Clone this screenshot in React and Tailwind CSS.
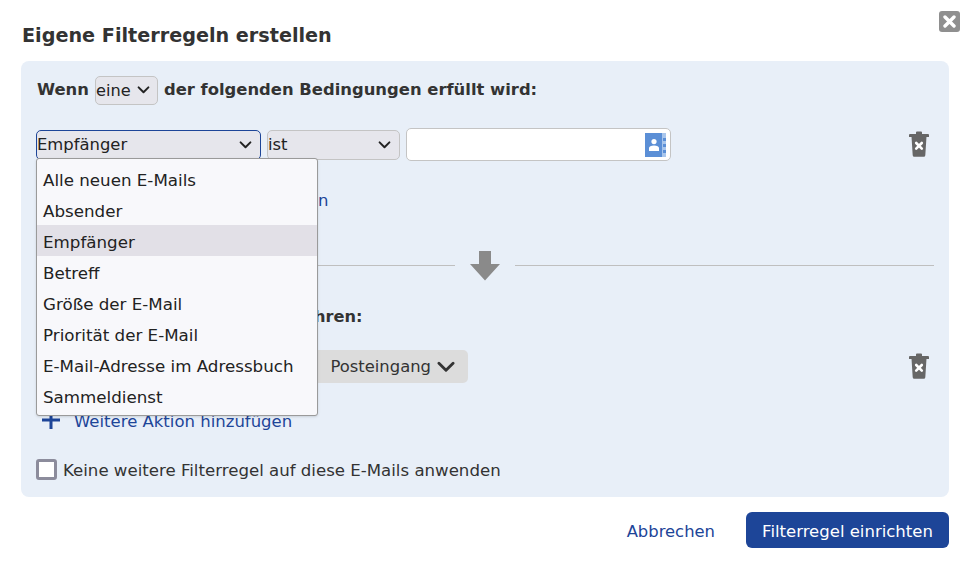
const FONT = "font-['DejaVu_Sans',Verdana,sans-serif]"

const OPTIONS = [
  'Alle neuen E-Mails',
  'Absender',
  'Empfänger',
  'Betreff',
  'Größe der E-Mail',
  'Priorität der E-Mail',
  'E-Mail-Adresse im Adressbuch',
  'Sammeldienst',
]

function Chevron({ className }) {
  return (
    <svg viewBox="0 0 14 9" fill="none" stroke="currentColor" strokeWidth="2.2" strokeLinecap="round" strokeLinejoin="round" className={className}>
      <path d="M1.5 1.5 7 7l5.5-5.5" />
    </svg>
  )
}

function Trash() {
  return (
    <svg viewBox="0 0 20 26" className="mb-[2px] h-[26px] w-[20px]">
      <path fill="#666" d="M8 0.500h4a1 1 0 0 1 1 1V3h6a1 1 0 0 1 1 1v2H0V4a1 1 0 0 1 1-1h6V1.500a1 1 0 0 1 1-1z" />
      <path fill="#666" d="M2.500 5.500h15l-1.200 18.800a1.600 1.600 0 0 1-1.600 1.500H5.300a1.600 1.600 0 0 1-1.600-1.500z" />
      <path stroke="#fff" strokeWidth="2.600" strokeLinecap="round" d="M7.200 12l5.600 5.600M12.800 12l-5.600 5.600" />
    </svg>
  )
}

function AddressBook() {
  return (
    <svg viewBox="0 0 21 24" className="h-[24px] w-[21px]">
      <rect width="21" height="24" fill="#5b8fd6" />
      <rect x="17" width="4" height="24" fill="#a9c6ec" />
      <rect x="18" y="5" width="3" height="3" fill="#5b8fd6" />
      <rect x="18" y="11" width="3" height="3" fill="#5b8fd6" />
      <rect x="18" y="17" width="3" height="3" fill="#5b8fd6" />
      <circle cx="9" cy="8.600" r="2.600" fill="#fff" />
      <path fill="#fff" d="M4 18v-3c0-1.500 2-2.500 5-2.500s5 1 5 2.500v3z" />
    </svg>
  )
}

function AddRow({ children }) {
  return (
    <div className="flex h-[24px] items-center text-[16.5px] text-[#1d4598]">
      <svg viewBox="0 0 18 18" className="mb-[2px] ml-[6px] mr-[14px] h-[18px] w-[18px]">
        <path stroke="#1d4598" strokeWidth="3" d="M9 0v18M0 9h18" />
      </svg>
      <span className="whitespace-nowrap pt-[2px]">{children}</span>
    </div>
  )
}

export default function App() {
  return (
    <div className={`${FONT} relative h-[567px] w-[968px] overflow-hidden bg-white text-[#333]`}>
      {/* Close */}
      <button className="absolute left-[939px] top-[11px] flex h-[21px] w-[21px] items-center justify-center rounded-[3px] bg-[#8f8f8f]">
        <svg viewBox="0 0 13 13" className="h-[13px] w-[13px]">
          <path stroke="#fff" strokeWidth="3.400" strokeLinecap="round" d="M2 2l9 9M11 2l-9 9" />
        </svg>
      </button>

      <div className="px-[21px] pt-[21px]">
        <h1 className="h-[40px] pt-px pl-px text-[19.2px] font-bold leading-[27px]">Eigene Filterregeln erstellen</h1>

        <div className="relative h-[436px] w-[928px] rounded-lg bg-[#e8eff8] px-[15px]">
          {/* Condition heading */}
          <div className="flex h-[44px] items-center gap-[6px] pt-[14px] text-[16.4px] font-bold">
            <span className="pl-px">Wenn</span>
            <span className="flex h-[29px] w-[63px] items-center gap-[6px] rounded-[5px] border border-[#c4c4c4] bg-[#e6e6ec] text-[16.2px] font-normal text-[#222]">
              <span className="pt-[2px]">eine</span>
              <Chevron className="h-[8px] w-[13px] text-[#222]" />
            </span>
            <span>der folgenden Bedingungen erfüllt wird:</span>
          </div>

          {/* Condition row */}
          <div className="mt-[23px] flex h-[33px] items-center gap-[6px]">
            <div className="flex h-[30px] w-[225px] items-center justify-between rounded-[5px] border border-[#1d4598] bg-[#e6e6ec] pr-[8px] text-[16.4px] text-[#222]">
              <span className="pt-px">Empfänger</span>
              <Chevron className="h-[8px] w-[13px]" />
            </div>
            <div className="flex h-[30px] w-[133px] items-center justify-between rounded-[5px] border border-[#c4c4c4] bg-[#e6e6ec] pr-[8px] text-[16.4px] text-[#222]">
              <span className="pt-px">ist</span>
              <Chevron className="h-[8px] w-[13px]" />
            </div>
            <div className="flex h-[33px] w-[265px] items-center justify-end rounded-[5px] border border-[#c4c4c4] bg-white pr-1">
              <AddressBook />
            </div>
            <div className="ml-auto mr-[5px] flex">
              <Trash />
            </div>
          </div>

          {/* Add condition */}
          <div className="mt-[27px]">
            <AddRow>Weitere Bedingung hinzufügen</AddRow>
          </div>

          {/* Divider */}
          <div className="mt-[39px] flex h-[30px] items-start">
            <div className="mt-[14px] h-px w-[419px] bg-[#bfbfbf]" />
            <svg viewBox="0 0 30 30" className="mx-[15px] h-[30px] w-[30px] shrink-0">
              <path fill="#8a8a8a" d="M9 0h12v13h9L15 29.500 0 13h9z" />
            </svg>
            <div className="mt-[14px] h-px flex-1 bg-[#bfbfbf]" />
          </div>

          {/* Action heading */}
          <div className="mt-[24px] h-[23px] whitespace-nowrap pl-px text-[16.2px] font-bold leading-[24px]">
            Dann folgende Aktionen ausführen:
          </div>

          {/* Action row */}
          <div className="mt-[22px] flex h-[33px] items-center">
            <div className="ml-[271px] flex h-[33px] w-[161px] items-center justify-end gap-[6px] rounded-[5px] bg-[#dcdcdc] pr-[13px] text-[16.4px] whitespace-nowrap">
              <span className="pt-px">Posteingang</span>
              <Chevron className="h-[12px] w-[18px]" />
            </div>
            <div className="ml-auto mr-[5px] flex">
              <Trash />
            </div>
          </div>

          {/* Add action */}
          <div className="mt-[26px]">
            <AddRow>Weitere Aktion hinzufügen</AddRow>
          </div>

          {/* Checkbox */}
          <label className="mt-[26px] flex h-[21px] items-center gap-[6px] text-[16.6px]">
            <span className="h-[21px] w-[21px] rounded-[3px] border-[3px] border-[#8c8c9c] bg-white" />
            <span className="pt-[3px]">Keine weitere Filterregel auf diese E-Mails anwenden</span>
          </label>

          {/* Open dropdown */}
          <ul className="absolute left-[15px] top-[97px] w-[282px] rounded-[3px] border border-[#9a9a9a] bg-[#f8f8fb] py-[4px] text-[16.7px] leading-[35px] text-[#222] shadow-sm">
            {OPTIONS.map((o) => (
              <li key={o} className={`h-[31px] pl-[6px] ${o === 'Empfänger' ? 'bg-[#e2e0e7]' : ''}`}>{o}</li>
            ))}
          </ul>
        </div>

        {/* Footer */}
        <div className="flex w-[928px] items-center justify-end gap-[31px] pt-[15px]">
          <button className="pt-[5px] text-[16.4px] text-[#1d4598]">Abbrechen</button>
          <button className="h-[36px] w-[203px] rounded-[6px] bg-[#1d4598] pt-[4px] text-[16.5px] text-white">Filterregel einrichten</button>
        </div>
      </div>
    </div>
  )
}
